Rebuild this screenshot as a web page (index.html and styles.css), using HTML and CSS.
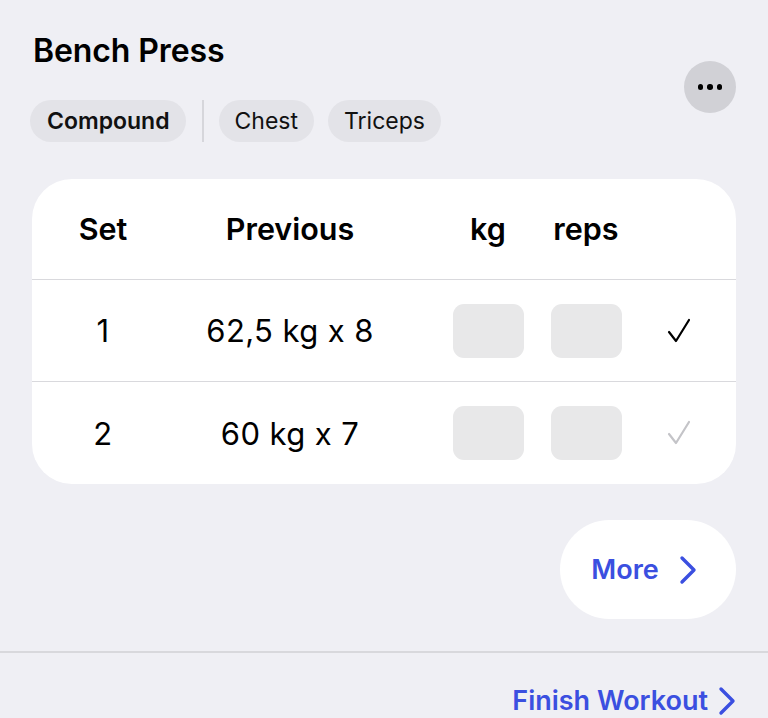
FILE: index.html
```html
<!DOCTYPE html>
<html>
<head>
<meta charset="utf-8">
<link rel="stylesheet" href="styles.css">
</head>
<body>
<div class="page">
  <div class="top">
    <div class="info">
      <h1 class="title">Bench Press</h1>
      <div class="chips">
        <span class="chip chip-main">Compound</span>
        <span class="divider"></span>
        <span class="chip">Chest</span>
        <span class="chip">Triceps</span>
      </div>
    </div>
    <button class="menu" aria-label="More options">
      <span class="dot"></span><span class="dot"></span><span class="dot"></span>
    </button>
  </div>

  <div class="card">
    <div class="row head">
      <div class="c-set">Set</div>
      <div class="c-prev">Previous</div>
      <div></div>
      <div class="c-kg">kg</div>
      <div class="c-reps">reps</div>
      <div class="c-check"></div>
    </div>
    <div class="row">
      <div class="c-set">1</div>
      <div class="c-prev">62,5 kg x 8</div>
      <div></div>
      <div class="c-kg"><span class="box"></span></div>
      <div class="c-reps"><span class="box"></span></div>
      <div class="c-check"><svg class="tick" width="28" height="30" viewBox="0 0 28 30"><path d="M3 16 L10 25 L23 4" fill="none" stroke="currentColor" stroke-width="2.2" stroke-linecap="round" stroke-linejoin="round"/></svg></div>
    </div>
    <div class="row last">
      <div class="c-set">2</div>
      <div class="c-prev">60 kg x 7</div>
      <div></div>
      <div class="c-kg"><span class="box"></span></div>
      <div class="c-reps"><span class="box"></span></div>
      <div class="c-check dim"><svg class="tick" width="28" height="30" viewBox="0 0 28 30"><path d="M3 16 L10 25 L23 4" fill="none" stroke="currentColor" stroke-width="2.2" stroke-linecap="round" stroke-linejoin="round"/></svg></div>
    </div>
  </div>

  <div class="more-wrap">
    <button class="more">More
      <svg width="18" height="30" viewBox="0 0 18 30"><path d="M3 3 L15 15 L3 27" fill="none" stroke="currentColor" stroke-width="3.4" stroke-linecap="round" stroke-linejoin="round"/></svg>
    </button>
  </div>

  <div class="footer">
    <a class="finish">Finish Workout
      <svg width="18" height="30" viewBox="0 0 18 30"><path d="M3 3 L15 15 L3 27" fill="none" stroke="currentColor" stroke-width="3.4" stroke-linecap="round" stroke-linejoin="round"/></svg>
    </a>
  </div>
</div>
</body>
</html>
```

FILE: styles.css
```css
* { box-sizing: border-box; }
html, body {
  margin: 0;
  padding: 0;
  background: #efeff4;
  font-family: Inter, "Noto Sans", sans-serif;
  color: #000;
}
.page {
  width: 768px;
  height: 718px;
  overflow: hidden;
}
.top {
  display: flex;
  justify-content: space-between;
  padding: 31px 32px 0 30px;
}
.title {
  margin: 0 0 0 3px;
  font-size: 32px;
  font-weight: 600;
  line-height: 40px;
  letter-spacing: -0.1px;
}
.chips {
  display: flex;
  align-items: center;
  margin-top: 29px;
  gap: 14px;
}
.chip {
  height: 42px;
  line-height: 42px;
  padding: 0 16px;
  border-radius: 21px;
  background: #e3e3e8;
  font-size: 23px;
  font-weight: 400;
  color: #111;
}
.chip-main { font-weight: 600; padding: 0 16px 0 17px; }
.divider {
  width: 2px;
  height: 42px;
  background: #d6d6db;
  margin: 0 1px 0 2px;
}
.menu {
  margin-top: 30px;
  width: 52px;
  height: 52px;
  border-radius: 50%;
  border: none;
  background: #d1d1d6;
  display: flex;
  align-items: center;
  justify-content: center;
  gap: 4px;
  padding: 0;
}
.dot {
  width: 5.5px;
  height: 5.5px;
  border-radius: 50%;
  background: #000;
}
.card {
  margin: 37px 32px 0 32px;
  background: #fff;
  border-radius: 40px;
  overflow: hidden;
}
.row {
  display: grid;
  grid-template-columns: 142px 232px 33px 98px 98px 86px 1fr;
  align-items: center;
  height: 102px;
  border-top: 1px solid #d9d9dd;
  font-size: 31px;
  letter-spacing: 0.4px;
  text-align: center;
}
.row.last { height: 103px; }
.row.head {
  height: 100px;
  border-top: none;
  font-weight: 600;
  font-size: 30.5px;
  letter-spacing: 0;
  padding-bottom: 2px;
}
.c-check {
  display: flex;
  justify-content: center;
  color: #000;
}
.tick { display: block; margin-left: 4px; }
.dim { color: #c4c4c8; }
.box {
  display: block;
  margin: 0 auto;
  width: 71px;
  height: 54px;
  border-radius: 11px;
  background: #e8e8e9;
}
.more-wrap {
  display: flex;
  justify-content: flex-end;
  padding: 36px 32px 0 0;
}
.more {
  width: 176px;
  height: 99px;
  border-radius: 50px;
  border: none;
  background: #fff;
  color: #3b4fe0;
  font-family: inherit;
  font-size: 27px;
  font-weight: 600;
  display: flex;
  align-items: center;
  justify-content: center;
  gap: 20px;
  padding: 0 8px 0 0;
}
.footer {
  margin-top: 32px;
  border-top: 2px solid #d8d8dc;
  display: flex;
  justify-content: flex-end;
  padding: 31px 32px 0 0;
}
.finish {
  color: #3b4fe0;
  font-size: 27px;
  font-weight: 600;
  display: flex;
  align-items: center;
  gap: 10px;
}
```
